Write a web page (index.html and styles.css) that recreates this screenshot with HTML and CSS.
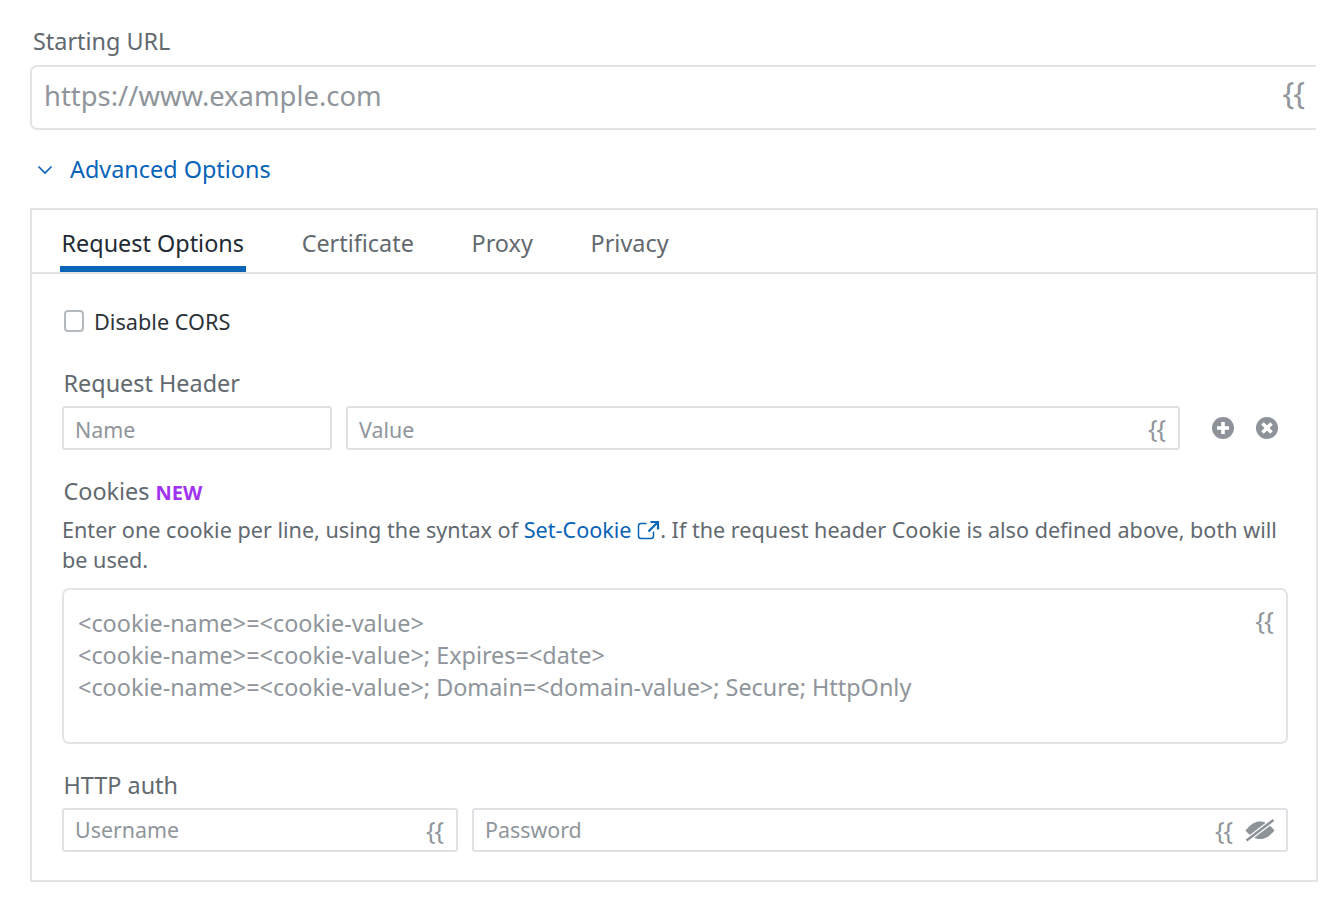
FILE: index.html
```html
<!DOCTYPE html>
<html lang="en">
<head>
    <meta charset="UTF-8">
    <title>Starting URL</title>
    <link rel="stylesheet" href="styles.css">
</head>
<body>
    <div class="page">
        <label class="field-label url-label" for="startUrl">Starting URL</label>
        <div class="url-box">
            <input type="text" id="startUrl" class="url-input" placeholder="https://www.example.com">
            <span class="braces braces-url">{{</span>
        </div>

        <a class="advanced" href="#">
            <svg class="chevron" width="16" height="10" viewBox="0 0 16 10"><path d="M1.500 1.500 8 8l6.500-6.500" fill="none" stroke="#0a64b8" stroke-width="1.700"/></svg>
            Advanced Options
        </a>

        <div class="panel">
            <div class="tabs">
                <span class="tab active">Request Options</span>
                <span class="tab">Certificate</span>
                <span class="tab">Proxy</span>
                <span class="tab">Privacy</span>
            </div>

            <div class="panel-body">
                <label class="check-row">
                    <span class="checkbox"></span>
                    Disable CORS
                </label>

                <div class="field-label small-label header-label">Request Header</div>
                <div class="header-row">
                    <input type="text" class="box name-box" placeholder="Name">
                    <div class="box-wrap value-wrap">
                        <input type="text" class="box" placeholder="Value">
                        <span class="braces">{{</span>
                    </div>
                    <svg class="round-icon icon-plus" width="24" height="24" viewBox="0 0 24 24"><circle cx="12" cy="12" r="11" fill="#8d9399"/><path d="M12 6v12M6 12h12" stroke="#fff" stroke-width="3.600"/></svg>
                    <svg class="round-icon icon-close" width="24" height="24" viewBox="0 0 24 24"><circle cx="12" cy="12" r="11" fill="#8d9399"/><path d="M7.500 7.500l9 9M16.500 7.500l-9 9" stroke="#fff" stroke-width="3.600"/></svg>
                </div>

                <div class="field-label small-label cookies-label">Cookies <span class="new">NEW</span></div>
                <p class="help">Enter one cookie per line, using the syntax of <a href="#">Set-Cookie</a> <svg class="ext" width="23" height="20" viewBox="0 0 23 20"><path d="M9.500 3.500H4A2.500 2.500 0 0 0 1.500 6v10A2.500 2.500 0 0 0 4 18.500h10a2.500 2.500 0 0 0 2.500-2.500v-4.500" fill="none" stroke="#0a64b8" stroke-width="1.500"/><path d="M13.500 2h7.500v7.500M20.500 2.500l-9 9" fill="none" stroke="#0a64b8" stroke-width="2.200"/></svg>. If the request header Cookie is also defined above, both will<br>be used.</p>
                <div class="box-wrap">
                    <textarea class="cookie-area" placeholder="&lt;cookie-name&gt;=&lt;cookie-value&gt;&#10;&lt;cookie-name&gt;=&lt;cookie-value&gt;; Expires=&lt;date&gt;&#10;&lt;cookie-name&gt;=&lt;cookie-value&gt;; Domain=&lt;domain-value&gt;; Secure; HttpOnly"></textarea>
                    <span class="braces braces-area">{{</span>
                </div>

                <div class="field-label small-label auth-label">HTTP auth</div>
                <div class="auth-row">
                    <div class="box-wrap user-wrap">
                        <input type="text" class="box auth-box" placeholder="Username">
                        <span class="braces">{{</span>
                    </div>
                    <div class="box-wrap pass-wrap">
                        <input type="text" class="box auth-box" placeholder="Password">
                        <span class="braces braces-pass">{{</span>
                        <svg class="eye" width="30" height="24" viewBox="0 0 30 24"><path d="M0.500 12.500C6 6 10 3.500 15 3.500s9 2.500 14.500 9C24 19 20 21 15 21S6 19 0.500 12.500z" fill="#8d9399"/><path d="M1.500 22.500 28.500 2" stroke="#fff" stroke-width="5"/><path d="M1.500 22.500 28.500 2" stroke="#8d9399" stroke-width="2.600"/></svg>
                    </div>
                </div>
            </div>
        </div>
    </div>
</body>
</html>
```

FILE: styles.css
```css
* { box-sizing: border-box; }
body { margin: 0; background: #fff; font-family: "Noto Sans", sans-serif; color: #62696f; overflow: hidden; }
.page { width: 1336px; height: 900px; padding: 25px 18px 0 30px; }

.field-label { display: block; font-size: 23.4px; line-height: 32px; color: #62696f; }
.url-label { padding-left: 3px; }
.small-label { padding-left: 1.500px; }

input, textarea { font-family: inherit; color: #2c3338; outline: none; background: #fff; }
input::placeholder, textarea::placeholder { color: #8f959b; opacity: 1; }

.url-box { position: relative; margin-top: 8px; margin-right: 2px; }
.url-input {
    display: block;
    width: 100%;
    height: 65px;
    padding: 0 60px 4px 12px;
    font-size: 27.4px;
    border: 2px solid #e2e4e6;
    border-right: none;
    border-radius: 7px 0 0 7px;
}
.braces { position: absolute; right: 15px; top: 50%; transform: translateY(-50%); font-size: 25px; line-height: 1; color: #8f959b; letter-spacing: -1px; }
.braces-url { font-size: 31px; right: 12px; top: 27px; }

.advanced { display: flex; align-items: center; margin: 23px 0 23px; height: 32px; font-size: 23.4px; color: #0a64b8; text-decoration: none; padding-left: 7px; }
.chevron { margin-right: 17px; margin-top: 2px; }

.panel { border: 2px solid #e2e4e6; height: 674px; }
.tabs { display: flex; height: 64px; padding-left: 28px; border-bottom: 2px solid #e2e4e6; }
.tab { height: 62px; padding: 17px 2.500px 0 1.500px; margin-right: 53.700px; font-size: 23.4px; line-height: 32px; color: #62696f; }
.tab.active { color: #1f2a33; border-bottom: 6px solid #0a64b8; }

.panel-body { padding: 0 28px 0 30px; }
.check-row { display: flex; align-items: center; height: 32px; margin-top: 31px; font-size: 21.7px; color: #2c3338; padding-left: 2px; }
.checkbox { width: 20px; height: 22px; margin-right: 10px; border: 2px solid #b4b9be; border-radius: 4px; }

.header-label { margin-top: 30px; }
.header-row { display: flex; align-items: center; margin-top: 7px; }
.box {
    display: block;
    width: 100%;
    height: 44px;
    padding: 2px 11px 0;
    font-size: 21.4px;
    border: 2px solid #dfe1e4;
    border-radius: 3px;
}
.auth-box { padding-top: 0; padding-bottom: 2px; }
.name-box { width: 270px; margin-right: 14px; }
.box-wrap { position: relative; }
.value-wrap { width: 834px; margin-right: 31px; }
.icon-plus { margin-right: 20px; }

.cookies-label { margin-top: 25px; }
.new { font-size: 20px; font-weight: 700; color: #a033ef; }
.help { margin: 6px 0 0; font-size: 21.6px; line-height: 30px; color: #62696f; }
.help a { color: #0a64b8; text-decoration: none; }
.ext { vertical-align: -2px; }

.cookie-area {
    display: block;
    width: 100%;
    height: 156px;
    margin-top: 13px;
    padding: 17px 60px 0 14px;
    font-size: 23.4px;
    line-height: 32px;
    border: 2px solid #e2e4e6;
    border-radius: 7px;
    resize: none;
}
.braces-area { top: 32px; font-size: 26px; right: 15px; }

.auth-label { margin-top: 25px; }
.auth-row { display: flex; margin-top: 7px; gap: 14px; }
.user-wrap { width: 396px; }
.pass-wrap { width: 816px; }
.braces-pass { right: 56px; }
.eye { position: absolute; right: 13px; top: 10px; }
```
